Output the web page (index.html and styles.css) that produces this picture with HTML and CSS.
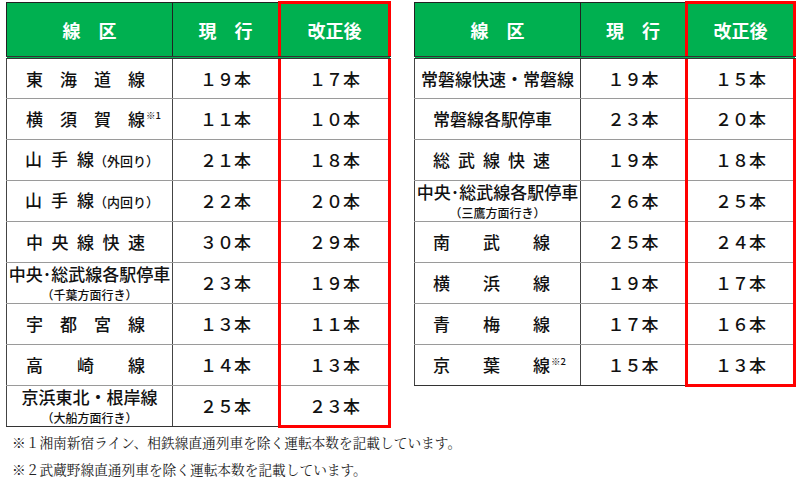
FILE: index.html
```html
<!DOCTYPE html>
<html lang="ja">
<head>
<meta charset="utf-8">
<title>運転本数</title>
<link rel="stylesheet" href="styles.css">
</head>
<body>
<div class="tables">
  <table class="t t-left">
    <colgroup><col class="c1"><col class="c2"><col class="c3"></colgroup>
    <thead>
      <tr><th>線　区</th><th>現　行</th><th class="new">改正後</th></tr>
    </thead>
    <tbody>
      <tr><td><div class="dist dl"><span class="ch">東</span><span class="ch">海</span><span class="ch">道</span><span class="ch">線</span></div></td><td>１９本</td><td class="new">１７本</td></tr>
      <tr><td><div class="dist dl"><span class="ch">横</span><span class="ch">須</span><span class="ch">賀</span><span class="ch">線<sup class="note">※1</sup></span></div></td><td>１１本</td><td class="new">１０本</td></tr>
      <tr><td><div class="yama"><span class="ych">山</span><span class="ych">手</span><span class="ych last">線</span><span class="small">（外回り）</span></div></td><td>２１本</td><td class="new">１８本</td></tr>
      <tr><td><div class="yama"><span class="ych">山</span><span class="ych">手</span><span class="ych last">線</span><span class="small">（内回り）</span></div></td><td>２２本</td><td class="new">２０本</td></tr>
      <tr><td><div class="dist dl"><span class="ch">中</span><span class="ch">央</span><span class="ch">線</span><span class="ch">快</span><span class="ch">速</span></div></td><td>３０本</td><td class="new">２９本</td></tr>
      <tr><td><div class="two"><div class="l1">中央<span class="dot">･</span>総武線各駅停車</div><div class="l2">（千葉方面行き）</div></div></td><td>２３本</td><td class="new">１９本</td></tr>
      <tr><td><div class="dist dl"><span class="ch">宇</span><span class="ch">都</span><span class="ch">宮</span><span class="ch">線</span></div></td><td>１３本</td><td class="new">１１本</td></tr>
      <tr><td><div class="dist dl"><span class="ch">高</span><span class="ch">崎</span><span class="ch">線</span></div></td><td>１４本</td><td class="new">１３本</td></tr>
      <tr><td><div class="two"><div class="l1">京浜東北・根岸線</div><div class="l2">（大船方面行き）</div></div></td><td>２５本</td><td class="new">２３本</td></tr>
    </tbody>
  </table>

  <table class="t t-right">
    <colgroup><col class="c1"><col class="c2"><col class="c3"></colgroup>
    <thead>
      <tr><th>線　区</th><th>現　行</th><th class="new">改正後</th></tr>
    </thead>
    <tbody>
      <tr><td><div class="one">常磐線快速・常磐線</div></td><td>１９本</td><td class="new">１５本</td></tr>
      <tr><td><div class="dist dr"><span class="ch">常</span><span class="ch">磐</span><span class="ch">線</span><span class="ch">各</span><span class="ch">駅</span><span class="ch">停</span><span class="ch">車</span></div></td><td>２３本</td><td class="new">２０本</td></tr>
      <tr><td><div class="dist dr"><span class="ch">総</span><span class="ch">武</span><span class="ch">線</span><span class="ch">快</span><span class="ch">速</span></div></td><td>１９本</td><td class="new">１８本</td></tr>
      <tr><td><div class="two"><div class="l1">中央<span class="dot">･</span>総武線各駅停車</div><div class="l2">（三鷹方面行き）</div></div></td><td>２６本</td><td class="new">２５本</td></tr>
      <tr><td><div class="dist dr"><span class="ch">南</span><span class="ch">武</span><span class="ch">線</span></div></td><td>２５本</td><td class="new">２４本</td></tr>
      <tr><td><div class="dist dr"><span class="ch">横</span><span class="ch">浜</span><span class="ch">線</span></div></td><td>１９本</td><td class="new">１７本</td></tr>
      <tr><td><div class="dist dr"><span class="ch">青</span><span class="ch">梅</span><span class="ch">線</span></div></td><td>１７本</td><td class="new">１６本</td></tr>
      <tr><td><div class="dist dr"><span class="ch">京</span><span class="ch">葉</span><span class="ch">線<sup class="note">※2</sup></span></div></td><td>１５本</td><td class="new">１３本</td></tr>
    </tbody>
  </table>
</div>

<div class="notes">
  <p>※１湘南新宿ライン、相鉄線直通列車を除く運転本数を記載しています。</p>
  <p>※２武蔵野線直通列車を除く運転本数を記載しています。</p>
</div>
</body>
</html>
```

FILE: styles.css
```css
* { box-sizing: border-box; }

body {
  margin: 0;
  background: #ffffff;
  color: #111111;
  font-family: "Noto Sans CJK JP", "Noto Sans", sans-serif;
}

.tables {
  display: flex;
  align-items: flex-start;
  gap: 23px;
  padding: 1px 0 0 6px;
}

.t {
  border-collapse: collapse;
  table-layout: fixed;
  font-size: 17px;
}

.t-left { width: 383px; }
.t-right { width: 380px; }

.t-left .c1 { width: 166px; }
.t-left .c2 { width: 107px; }
.t-left .c3 { width: 110px; }

.t-right .c1 { width: 166px; }
.t-right .c2 { width: 106px; }
.t-right .c3 { width: 108px; }

.t th {
  background: #00b050;
  color: #ffffff;
  font-weight: 700;
  font-size: 18px;
  height: 55px;
  padding: 0;
  text-align: center;
  border: 1px solid #222222;
  border-bottom: 3px double #333333;
}

.t td {
  height: 41px;
  padding: 0;
  text-align: center;
  font-weight: 500;
  line-height: 20px;
  border-top: 1px solid #9a9a9a;
  border-bottom: 1px solid #9a9a9a;
  border-left: 1px solid #444444;
  border-right: 1px solid #444444;
  white-space: nowrap;
}

.t tbody tr:last-child td { border-bottom: 1px solid #333333; }

.t .new {
  border-left: 3px solid #ff0000;
  border-right: 3px solid #ff0000;
}

.t th.new { border-top: 3px solid #ff0000; }
.t tbody tr:last-child td.new { border-bottom: 3px solid #ff0000; }

.dist {
  display: flex;
  justify-content: space-between;
}

.dl { padding: 0 27px 0 19px; }
.dr { padding: 0 30px 0 18px; }

.ch {
  flex: none;
  width: 17px;
  text-align: left;
  white-space: nowrap;
}

.note {
  font-size: 9.5px;
  vertical-align: 7px;
  line-height: 0;
  margin-left: 1px;
}

.yama {
  display: flex;
  align-items: baseline;
  padding-left: 18px;
}

.ych { margin-right: 9px; }
.ych.last { margin-right: 0; }

.small { font-size: 13px; }

.two {
  display: flex;
  flex-direction: column;
  align-items: center;
}

.l1 { line-height: 20px; }
.l2 { font-size: 12px; line-height: 16px; margin-top: 3px; }

.dot { display: inline-block; width: 8.5px; text-align: center; }

.notes {
  padding: 1px 0 0 12px;
  font-family: "Noto Serif CJK JP", "Noto Sans CJK JP", serif;
  font-size: 13.7px;
  line-height: 27px;
  color: #222222;
}

.notes p { margin: 0; }
```
